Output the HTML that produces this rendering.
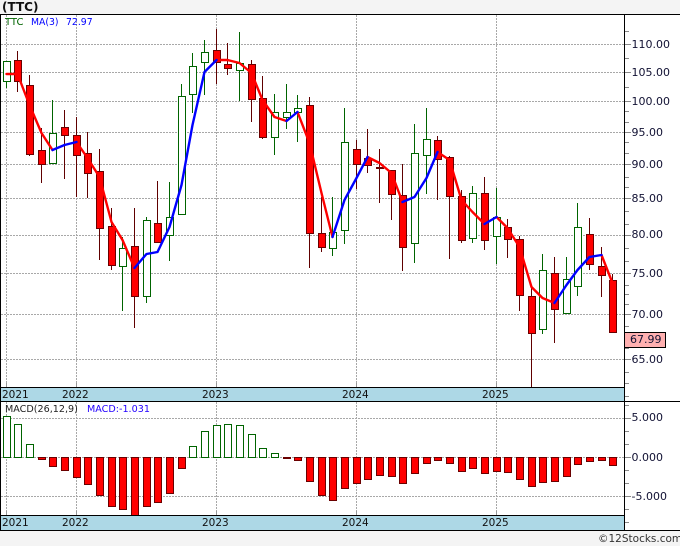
<!DOCTYPE html>
<html><head><meta charset="utf-8"><title>TTC</title>
<style>html,body{margin:0;padding:0;background:#f4f4f4;width:680px;height:546px;overflow:hidden}svg{display:block}text{font-family:"DejaVu Sans","Liberation Sans",sans-serif}</style></head>
<body>
<svg width="680" height="546" viewBox="0 0 680 546" xmlns="http://www.w3.org/2000/svg">
<rect width="680" height="546" fill="#f4f4f4"/>
<rect x="0" y="14" width="680" height="517" fill="#fff"/>
<g shape-rendering="crispEdges">
<path fill="none" stroke="#a8a8a8" stroke-dasharray="2 1" d="M1 44.5H624M1 72.5H624M1 101.5H624M1 132.5H624M1 164.5H624M1 198.5H624M1 235.5H624M1 273.5H624M1 314.5H624M1 359.5H624M1 418.5H624M1 457.5H624M1 496.5H624M6.5 15V387M76.5 15V387M216.5 15V387M356.5 15V387M496.5 15V387M6.5 402V515M76.5 402V515M216.5 402V515M356.5 402V515M496.5 402V515"/>
<path fill="none" stroke="#999" d="M6.5 383V387M76.5 383V387M216.5 383V387M356.5 383V387M496.5 383V387M6.5 511V515M76.5 511V515M216.5 511V515M356.5 511V515M496.5 511V515"/>
<path fill="none" stroke="#888" d="M625 31.5h4M625 44.5h6M625 58.5h4M625 72.5h6M625 87.5h4M625 101.5h6M625 111.5h4M625 122.5h4M625 132.5h6M625 142.5h4M625 153.5h4M625 164.5h6M625 177.5h4M625 187.5h4M625 198.5h6M625 211.5h4M625 224.5h4M625 235.5h6M625 248.5h4M625 261.5h4M625 273.5h6M625 285.5h4M625 294.5h4M625 304.5h4M625 314.5h6M625 326.5h4M625 348.5h4M625 359.5h6M625 372.5h4M625 383.5h4M625 396.5h4M625 405.5h4M625 418.5h6M625 431.5h4M625 444.5h4M625 457.5h6M625 470.5h4M625 483.5h4M625 496.5h6M625 509.5h4M625 522.5h4"/>
<!-- wicks -->
<path fill="none" stroke="#600000" d="M17.5 51V92M29.5 75V156M41.5 128V183M64.5 110V179M76.5 117V197M87.5 132V198M99.5 149V260M111.5 208V270M134.5 208V328M157.5 181V242M216.5 29V84M227.5 43V75M251.5 60V122M262.5 76V139M309.5 97V268M321.5 197V252M356.5 140V189M367.5 129V173M379.5 149V203M391.5 170V220M402.5 164V271M437.5 136V200M449.5 156V259M461.5 190V243M484.5 177V250M507.5 219V258M519.5 236V311M531.5 285V387M554.5 257V343M589.5 218V270M601.5 247V297M612.5 274V333"/>
<path fill="none" stroke="#006400" d="M6.5 61V88M52.5 100V163M122.5 237V311M146.5 217V303M169.5 182V261M181.5 84V214M192.5 53V113M204.5 40V95M239.5 32V101M274.5 94V155M286.5 84V129M297.5 95V142M332.5 197V256M344.5 108V244M414.5 124V263M426.5 108V194M472.5 186V243M496.5 188V264M542.5 254V334M566.5 257V314M577.5 203V296"/>
<!-- bodies -->
<path fill="#f00" stroke="#6a0000" d="M14.5 60.5h7V81.5h-7zM26.5 85.5h7V154.5h-7zM38.5 150.5h7V164.5h-7zM61.5 127.5h7V135.5h-7zM73.5 135.5h7V155.5h-7zM84.5 153.5h7V173.5h-7zM96.5 171.5h7V228.5h-7zM108.5 226.5h7V265.5h-7zM131.5 246.5h7V296.5h-7zM154.5 223.5h7V242.5h-7zM213.5 50.5h7V62.5h-7zM224.5 64.5h7V68.5h-7zM248.5 64.5h7V99.5h-7zM259.5 98.5h7V137.5h-7zM306.5 105.5h7V233.5h-7zM318.5 233.5h7V247.5h-7zM353.5 149.5h7V164.5h-7zM364.5 158.5h7V165.5h-7zM376.5 167.5h7V168.5h-7zM388.5 170.5h7V194.5h-7zM399.5 195.5h7V247.5h-7zM434.5 140.5h7V159.5h-7zM446.5 157.5h7V196.5h-7zM458.5 196.5h7V240.5h-7zM481.5 193.5h7V240.5h-7zM504.5 227.5h7V239.5h-7zM516.5 239.5h7V295.5h-7zM528.5 296.5h7V333.5h-7zM551.5 273.5h7V309.5h-7zM586.5 234.5h7V264.5h-7zM598.5 266.5h7V275.5h-7zM609.5 280.5h7V332.5h-7z"/>
<path fill="#fff" stroke="#006400" d="M3.5 61.5h7V81.5h-7zM49.5 133.5h7V163.5h-7zM119.5 248.5h7V266.5h-7zM143.5 220.5h7V296.5h-7zM166.5 217.5h7V235.5h-7zM178.5 96.5h7V214.5h-7zM189.5 66.5h7V94.5h-7zM201.5 52.5h7V62.5h-7zM236.5 63.5h7V70.5h-7zM271.5 112.5h7V137.5h-7zM283.5 112.5h7V117.5h-7zM294.5 108.5h7V112.5h-7zM329.5 232.5h7V248.5h-7zM341.5 142.5h7V230.5h-7zM411.5 153.5h7V243.5h-7zM423.5 139.5h7V155.5h-7zM469.5 193.5h7V238.5h-7zM493.5 217.5h7V236.5h-7zM539.5 270.5h7V329.5h-7zM563.5 279.5h7V313.5h-7zM574.5 227.5h7V286.5h-7z"/>
<!-- MACD -->
<path fill="#fff" stroke="#006400" d="M3.5 416.5h7V457.5h-7zM14.5 424.5h7V457.5h-7zM26.5 444.5h7V457.5h-7zM189.5 446.5h7V457.5h-7zM201.5 431.5h7V457.5h-7zM213.5 425.5h7V457.5h-7zM224.5 424.5h7V457.5h-7zM236.5 425.5h7V457.5h-7zM248.5 434.5h7V457.5h-7zM259.5 448.5h7V457.5h-7zM271.5 453.5h7V457.5h-7z"/>
<path fill="#f00" stroke="#6a0000" d="M38.5 457.5h7V459.5h-7zM49.5 457.5h7V466.5h-7zM61.5 457.5h7V470.5h-7zM73.5 457.5h7V477.5h-7zM84.5 457.5h7V484.5h-7zM96.5 457.5h7V495.5h-7zM108.5 457.5h7V506.5h-7zM119.5 457.5h7V509.5h-7zM131.5 457.5h7V515.5h-7zM143.5 457.5h7V506.5h-7zM154.5 457.5h7V502.5h-7zM166.5 457.5h7V493.5h-7zM178.5 457.5h7V468.5h-7zM283.5 457.5h7V458.5h-7zM294.5 457.5h7V460.5h-7zM306.5 457.5h7V481.5h-7zM318.5 457.5h7V495.5h-7zM329.5 457.5h7V500.5h-7zM341.5 457.5h7V488.5h-7zM353.5 457.5h7V483.5h-7zM364.5 457.5h7V479.5h-7zM376.5 457.5h7V475.5h-7zM388.5 457.5h7V476.5h-7zM399.5 457.5h7V483.5h-7zM411.5 457.5h7V473.5h-7zM423.5 457.5h7V463.5h-7zM434.5 457.5h7V460.5h-7zM446.5 457.5h7V463.5h-7zM458.5 457.5h7V471.5h-7zM469.5 457.5h7V468.5h-7zM481.5 457.5h7V473.5h-7zM493.5 457.5h7V471.5h-7zM504.5 457.5h7V472.5h-7zM516.5 457.5h7V479.5h-7zM528.5 457.5h7V486.5h-7zM539.5 457.5h7V482.5h-7zM551.5 457.5h7V481.5h-7zM563.5 457.5h7V476.5h-7zM574.5 457.5h7V464.5h-7zM586.5 457.5h7V461.5h-7zM598.5 457.5h7V460.5h-7zM609.5 457.5h7V465.5h-7z"/>
</g>
<!-- MA line -->
<g transform="translate(-.5 0)" fill="none" stroke-width="2.4" stroke-linejoin="round" stroke-linecap="round">
<path stroke="#f00" d="M7 74L18 74L30 105L42 133L53 150M77 142L88 158L100 177L112 222L123 240L135 268M217 60L228 60L240 63L252 73L263 100L275 117L287 121M298 112L310 143L322 193L333 237M368 157L380 163L392 173L403 202M438 152L450 160L462 200L473 212L485 224M497 217L508 228L520 247L532 287L543 298L555 303M602 255L613 283"/>
<path stroke="#00f" d="M53 150L65 145L77 142M135 268L147 254L158 252L170 227L182 185L193 125L205 72L217 60M287 121L298 112M333 237L345 200L357 178L368 157M403 202L415 197L427 178L438 152M485 224L497 217M555 303L567 285L578 270L590 257L602 255"/>
</g>
<!-- bands and frame -->
<g shape-rendering="crispEdges">
<rect x="1" y="387" width="623" height="14" fill="#add8e6"/>
<rect x="1" y="516" width="623" height="14" fill="#add8e6"/>
<rect x="0" y="14" width="680" height="1" fill="#000"/>
<rect x="0" y="387" width="624" height="1" fill="#000"/>
<rect x="0" y="401" width="680" height="1" fill="#000"/>
<rect x="0" y="515" width="624" height="1" fill="#000"/>
<rect x="0" y="530" width="680" height="1" fill="#000"/>
<rect x="0" y="14" width="1" height="517" fill="#000"/>
<rect x="624" y="14" width="1" height="517" fill="#000"/>
<rect x="624.5" y="332.5" width="41" height="15" fill="#ffb0b0" stroke="#000"/>
</g>
<text x="2" y="11" font-size="12" font-weight="bold" fill="#111">(TTC)</text>
<text x="5" y="25" font-size="10" fill="#006400">TTC</text>
<text x="31" y="25" font-size="9.3" fill="#0000ff">MA(3)</text>
<text x="66" y="25" font-size="9.3" fill="#0000ff">72.97</text>
<text x="5" y="412" font-size="9.6" fill="#222">MACD(26,12,9)</text>
<text x="87" y="412" font-size="9.6" fill="#2200ff">MACD:-1.031</text>
<g font-size="10.5" fill="#111">
<text x="2" y="398">2021</text><text x="62" y="398">2022</text><text x="202" y="398">2023</text><text x="342" y="398">2024</text><text x="482" y="398">2025</text>
<text x="2" y="526">2021</text><text x="62" y="526">2022</text><text x="202" y="526">2023</text><text x="342" y="526">2024</text><text x="482" y="526">2025</text>
</g>
<g font-size="11" fill="#111133">
<text x="631.5" y="48">110.00</text><text x="631.5" y="76">105.00</text><text x="631.5" y="105">100.00</text>
<text x="631.5" y="136">95.00</text><text x="631.5" y="168">90.00</text><text x="631.5" y="202">85.00</text>
<text x="631.5" y="238">80.00</text><text x="631.5" y="277">75.00</text><text x="631.5" y="318">70.00</text>
<text x="631.5" y="363">65.00</text><text x="630" y="343">67.99</text>
<text x="631.5" y="421">5.000</text><text x="631.5" y="461">0.000</text><text x="631.5" y="500">-5.000</text>
</g>
<text x="598" y="542" font-size="10.5" fill="#333">©12Stocks.com</text>
</svg>
</body></html>
